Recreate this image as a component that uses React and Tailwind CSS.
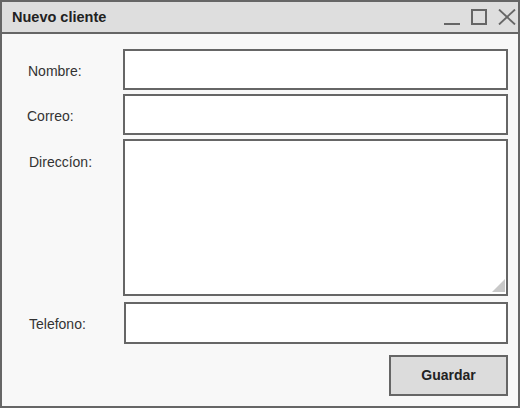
export default function App() {
  const font = { fontFamily: '"Liberation Sans", Arial, sans-serif' };
  return (
    <div className="w-[520px] h-[408px] border-2 border-[#666] bg-[#f8f8f8] flex flex-col" style={font}>
      <div className="h-[32px] shrink-0 bg-[#dedede] border-b-2 border-[#666] flex items-center justify-between pl-[10px] pr-[2px]">
        <span className="text-[14.5px] font-bold text-[#222] leading-none">Nuevo cliente</span>
        <div className="flex items-center gap-[11px]">
          <svg width="16" height="16" viewBox="0 0 16 16">
            <line x1="0" y1="15" x2="16" y2="15" stroke="#666" strokeWidth="2" />
          </svg>
          <svg width="16" height="16" viewBox="0 0 16 16">
            <rect x="1" y="1" width="14" height="14" fill="none" stroke="#666" strokeWidth="2" />
          </svg>
          <svg width="18" height="16" viewBox="0 0 18 16">
            <line x1="1" y1="0.5" x2="17" y2="15.5" stroke="#666" strokeWidth="1.8" />
            <line x1="17" y1="0.5" x2="1" y2="15.5" stroke="#666" strokeWidth="1.8" />
          </svg>
        </div>
      </div>
      <div className="flex-1 flex flex-col pt-[15px] pr-[10px] text-[14px] text-[#333]">
        <div className="flex items-center">
          <div className="w-[121px] pl-[26px] mt-1">Nombre:</div>
          <div className="flex-1 h-[41px] bg-white border-2 border-[#666]"></div>
        </div>
        <div className="flex items-center mt-[4px]">
          <div className="w-[121px] pl-[25px] mt-1">Correo:</div>
          <div className="flex-1 h-[41px] bg-white border-2 border-[#666]"></div>
        </div>
        <div className="flex items-start mt-[4px]">
          <div className="w-[121px] pl-[27px] pt-[13px]">Direccíon:</div>
          <div className="flex-1 h-[157px] bg-white border-2 border-[#666] relative">
            <svg className="absolute right-[1px] bottom-[2px]" width="13" height="13" viewBox="0 0 13 13">
              <polygon points="13,0 13,13 0,13" fill="#c8c8c8" />
            </svg>
          </div>
        </div>
        <div className="flex items-center mt-[6px]">
          <div className="w-[122px] pl-[27px] mt-[3px]">Telefono:</div>
          <div className="flex-1 h-[42px] bg-white border-2 border-[#666]"></div>
        </div>
        <div className="flex justify-end mt-[11px]">
          <div className="w-[119px] h-[41px] bg-[#dcdcdc] border-2 border-[#666] flex items-center justify-center font-bold text-[#222]">
            Guardar
          </div>
        </div>
      </div>
    </div>
  );
}
